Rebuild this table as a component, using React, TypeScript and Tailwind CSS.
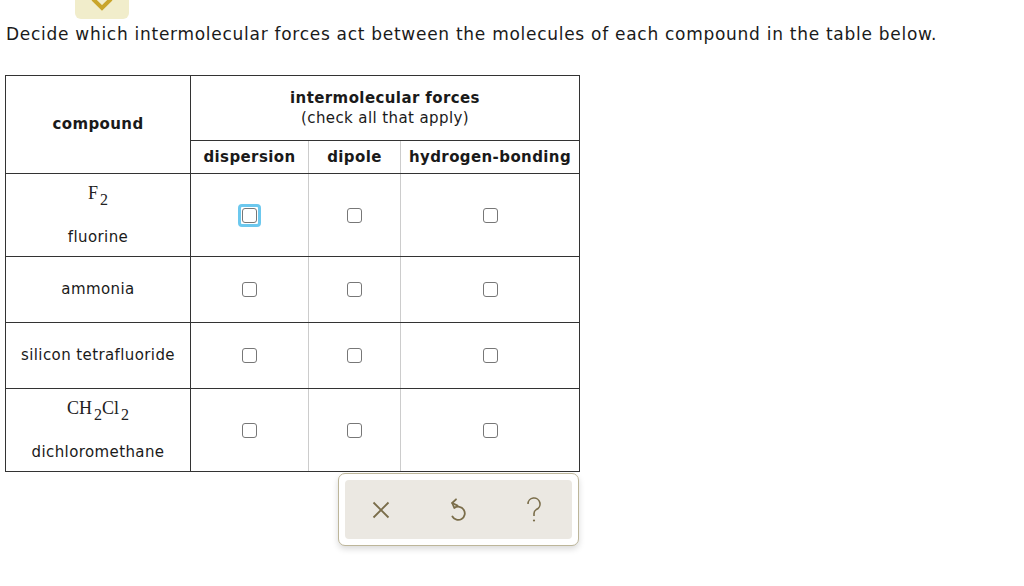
import React from 'react';

const Box = ({ focused = false }: { focused?: boolean }) => (
  <div className="flex justify-center">
    <div
      className={`flex items-center justify-center rounded-[4px] border-[3px] p-[1px] ${
        focused ? 'border-[#6cc8ee]' : 'border-transparent'
      }`}
    >
      <div className="w-[15px] h-[15px] rounded-[3px] border-[1.5px] border-[#777] bg-white"></div>
    </div>
  </div>
);

const Sub = ({ children }: { children: React.ReactNode }) => (
  <span className="text-[16px] relative top-[6px] ml-[2px]">{children}</span>
);

export default function App() {
  const rows = [
    { formula: <>F<Sub>2</Sub></>, name: 'fluorine', h: 'h-[83px]', focused: true },
    { formula: null, name: 'ammonia', h: 'h-[66px]', focused: false },
    { formula: null, name: 'silicon tetrafluoride', h: 'h-[66px]', focused: false },
    {
      formula: (
        <>
          CH<Sub>2</Sub>Cl<Sub>2</Sub>
        </>
      ),
      name: 'dichloromethane',
      h: 'h-[83px]',
      focused: false
    }
  ];

  return (
    <div
      className="w-[1024px] h-[586px] bg-white text-[#1a1a1a] relative overflow-hidden"
      style={{ fontFamily: '"DejaVu Sans", Verdana, sans-serif' }}
    >
      <div className="ml-[75px] w-[54px] h-[19px] rounded-b-[6px] bg-[#f1edcb] flex justify-center items-start">
        <svg width="24" height="12" viewBox="0 0 24 12">
          <path d="M3 -1 L12 8 L21 -1" fill="none" stroke="#c9a52a" strokeWidth="4" />
        </svg>
      </div>
      <p className="ml-[6px] mt-[3px] text-[17px] leading-[24px] tracking-[0.72px]">
        Decide which intermolecular forces act between the molecules of each compound in the table below.
      </p>

      <table className="ml-[5px] mt-[29px] border-collapse table-fixed text-[15px] tracking-[0.4px]" style={{ width: 574 }}>
        <colgroup>
          <col style={{ width: 185 }} />
          <col style={{ width: 118 }} />
          <col style={{ width: 92 }} />
          <col style={{ width: 179 }} />
        </colgroup>
        <thead>
          <tr className="h-[65px]">
            <th rowSpan={2} className="border-[1.5px] border-[#333] font-bold align-middle">
              compound
            </th>
            <th colSpan={3} className="border-[1.5px] border-[#333] font-normal leading-[20px]">
              <div className="font-bold">intermolecular forces</div>
              <div>(check all that apply)</div>
            </th>
          </tr>
          <tr className="h-[33px]">
            <th className="border-y-[1.5px] border-[#333] border-r border-r-[#ccc] font-bold">dispersion</th>
            <th className="border-y-[1.5px] border-[#333] border-r border-r-[#ccc] font-bold">dipole</th>
            <th className="border-y-[1.5px] border-r-[1.5px] border-[#333] font-bold">hydrogen-bonding</th>
          </tr>
        </thead>
        <tbody>
          {rows.map((r, i) => (
            <tr key={i} className={r.h}>
              <td className="border-[1.5px] border-[#333] text-center align-middle">
                {r.formula && (
                  <div
                    className="text-[18px] leading-[22px] tracking-normal text-[#222]"
                    style={{ fontFamily: '"Liberation Serif", serif' }}
                  >
                    {r.formula}
                  </div>
                )}
                <div className={r.formula ? 'mt-[21px]' : ''}>{r.name}</div>
              </td>
              <td className="border-y-[1.5px] border-[#333] border-r border-r-[#ccc] align-middle">
                <Box focused={r.focused} />
              </td>
              <td className="border-y-[1.5px] border-[#333] border-r border-r-[#ccc] align-middle">
                <Box />
              </td>
              <td className="border-y-[1.5px] border-r-[1.5px] border-[#333] align-middle">
                <Box />
              </td>
            </tr>
          ))}
        </tbody>
      </table>

      <div className="ml-[338px] mt-[1px] w-[241px] h-[73px] rounded-[7px] border border-[#bdb69a] bg-white p-[6px] shadow-[0_3px_6px_rgba(0,0,0,0.15)]">
        <div className="h-full rounded-[4px] bg-[#ebe8e2] flex items-center justify-between pl-[27px] pr-[30px]">
          <svg width="18" height="18" viewBox="0 0 18 18">
            <path d="M1.5 1.5 L16.5 16.5 M16.5 1.5 L1.5 16.5" stroke="#7a6d4a" strokeWidth="1.8" fill="none" />
          </svg>
          <svg width="16" height="26" viewBox="0 0 16 26">
            <path
              d="M2.2 6 L4.3 11 A6.6 6.6 0 1 1 2.4 19.5"
              stroke="#7a6d4a"
              strokeWidth="1.8"
              fill="none"
              strokeLinecap="round"
              strokeLinejoin="round"
            />
            <path d="M6 2.3 L2.2 6 L7.5 8.6" stroke="#7a6d4a" strokeWidth="1.8" fill="none" strokeLinecap="round" strokeLinejoin="round" />
          </svg>
          <svg width="16" height="26" viewBox="0 0 16 26">
            <path
              d="M2 7 A6 6 0 1 1 10.2 12.6 C8.6 13.5 8 14.5 8 16.5 L8 19"
              stroke="#7a6d4a"
              strokeWidth="1.6"
              fill="none"
            />
            <circle cx="8" cy="23.5" r="1.1" fill="#7a6d4a" />
          </svg>
        </div>
      </div>
    </div>
  );
}
